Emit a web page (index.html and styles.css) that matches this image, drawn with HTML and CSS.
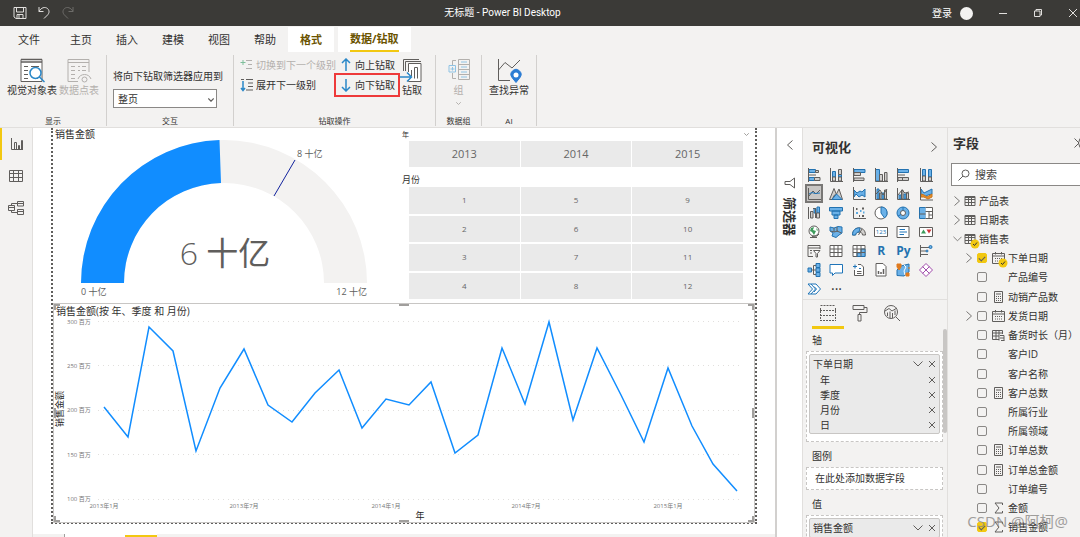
FILE: index.html
```html
<!DOCTYPE html>
<html lang="zh-CN">
<head>
  <meta charset="UTF-8">
  <title>无标题 - Power BI Desktop</title>
  <link rel="stylesheet" href="styles.css">
</head>
<body>
  <!-- shared icons -->
  <svg class="defs">
    <symbol id="right" viewBox="0 0 8 12"><path d="M1.500 1.500L6.500 6L1.500 10.500"/></symbol>
    <symbol id="left" viewBox="0 0 8 12"><path d="M6.500 1.500L1.500 6L6.500 10.500"/></symbol>
    <symbol id="down" viewBox="0 0 10 6"><path d="M.5 .5L5 5L9.500 .5"/></symbol>
    <symbol id="close" viewBox="0 0 8 8"><path d="M1 1L7 7M7 1L1 7"/></symbol>
    <symbol id="table" viewBox="0 0 12 12"><path d="M1 1.500H11V10.500H1ZM1 4.500H11M1 7.500H11M4.500 1.500V10.500M7.500 1.500V10.500"/><path d="M1 2H11" stroke-width="2"/></symbol>
    <symbol id="date" viewBox="0 0 13 12"><path d="M.5 1.500H12.500V11.500H.5ZM.5 4H12.500M3.500 0V2.500M9.500 0V2.500"/><path d="M3 6.500H11M3 9H11" stroke-dasharray="1 1"/></symbol>
    <symbol id="calc" viewBox="0 0 13 12"><path d="M2.500 .5H10.500V11.500H2.500ZM4 3H9"/><path d="M4 5.500H9.500M4 7.500H9.500M4 9.500H9.500" stroke-dasharray="1 1"/></symbol>
    <symbol id="calccol" viewBox="0 0 13 12"><path d="M7 10.500H.5V1.500H10.500V5M.5 4H10.500M.5 7H7M4 1.500V10.500M7 1.500V11.500"/><path d="M8 6.500H12V11.500M8 9H12M9 11.500H12.500"/></symbol>
    <symbol id="sum" viewBox="0 0 13 12"><path d="M10.500 3V1H3L7 6L3 11H10.500V9"/></symbol>
    <symbol id="tick" viewBox="0 0 10 10"><circle cx="5" cy="5" r="4.500" fill="#f2c811" stroke="none"/><path d="M3 5L4.500 6.500L7 3.500" stroke="#333"/></symbol>
  </svg>

  <header class="titlebar">
    <div class="quick">
      <button aria-label="保存"><svg width="14" height="14" viewBox="0 0 14 14"><path d="M1 1.500H13V12.500H3L1 11ZM3.500 1.500V6H10.500V1.500M4 12.500V8.500H10V12.500M6 9V12"/></svg></button>
      <button aria-label="撤消"><svg width="14" height="14" viewBox="0 0 14 14"><path d="M2 1V5.500H6.500M2 5.500C4 1.500 8 .5 10.500 2.500C13 5 12 7.500 10.500 9L7 12.500"/></svg></button>
      <button class="off" aria-label="恢复"><svg width="14" height="14" viewBox="0 0 14 14"><path d="M12 1V5.500H7.500M12 5.500C10 1.500 6 .5 3.500 2.500C1 5 2 7.500 3.500 9L7 12.500"/></svg></button>
    </div>
    <div class="app-title">无标题 - Power BI Desktop</div>
    <div class="account">
      <button class="login">登录 <span class="avatar"></span></button>
      <button aria-label="最小化"><svg width="10" height="10" viewBox="0 0 10 10"><path d="M1 5.500H9"/></svg></button>
      <button aria-label="还原"><svg width="10" height="10" viewBox="0 0 10 10"><path d="M1.500 3H7V8.500H1.500ZM3 3V1.500H8.500V7H7"/></svg></button>
      <button aria-label="关闭"><svg width="10" height="10" viewBox="0 0 10 10"><path d="M1 1L9 9M9 1L1 9"/></svg></button>
    </div>
  </header>

  <nav class="tabs">
    <button class="file">文件</button>
    <button>主页</button>
    <button>插入</button>
    <button>建模</button>
    <button>视图</button>
    <button>帮助</button>
    <button class="context">格式</button>
    <button class="context active"><span>数据/钻取</span></button>
  </nav>

  <section class="ribbon">
    <div class="group show">
      <div class="tools">
        <button class="big">
          <svg width="26" height="26" viewBox="0 0 26 26"><path d="M2 2.500H23V24.500H2Z" fill="#fff"/><path d="M2 2.500H23M2 5H23" stroke-width="1.500"/><path d="M5 9.500H9M5 13.500H9M5 17.500H9M5 21.500H9M12 9.500H20M17 21.500H19" /><circle cx="16.500" cy="16" r="5.500" fill="#fff" stroke="#2b88c8" stroke-width="1.500"/><path d="M20.500 20L25.500 25" stroke="#2b88c8" stroke-width="1.500"/></svg>
          视觉对象表
        </button>
        <button class="big" disabled>
          <svg width="26" height="26" viewBox="0 0 26 26"><path d="M12 24.500H2V2.500H23V15M2 5.500H23"/><path d="M5 9.500H9M5 13.500H9M5 17.500H9M12 9.500H14M16 9.500H20M12 13.500H14M16 13.500H20M5 21.500H9"/><path d="M12 22C14 16 23 16 25 22"/><circle cx="18.500" cy="22.500" r="2.500"/></svg>
          数据点表
        </button>
      </div>
      <div class="group-name">显示</div>
    </div>
    <div class="group interact">
      <label for="scope">将向下钻取筛选器应用到</label>
      <div class="select">
        <select id="scope"><option>整页</option></select>
        <svg width="6" height="4" viewBox="0 0 10 6"><path d="M.5 .5L5 5L9.500 .5" stroke-width="2"/></svg>
      </div>
      <div class="group-name">交互</div>
    </div>
    <div class="group drill">
      <div class="tools">
        <div class="stack">
          <button disabled><svg width="14" height="14" viewBox="0 0 14 14"><path d="M3 2V7M.5 4.500H5.500" stroke="#7fbf9b"/><path d="M6 2.500H12M8 6.500H12M6 10.500H12"/></svg>切换到下一个级别</button>
          <button><svg width="14" height="14" viewBox="0 0 14 14"><path d="M3 3V12M1 10L3 12.500L5 10" stroke="#2b88c8" stroke-width="1.500"/><path d="M1 1.500H4M6 1.500H13M8 5H13M8 8.500H13M6 12H13"/></svg>展开下一级别</button>
        </div>
        <div class="stack arrows">
          <button><svg width="14" height="14" viewBox="0 0 14 14"><path d="M7 1V13M3 5L7 1L11 5" stroke="#2b88c8" stroke-width="1.500"/></svg>向上钻取</button>
          <button class="marked"><svg width="14" height="14" viewBox="0 0 14 14"><path d="M7 1V13M3 9L7 13L11 9" stroke="#2b88c8" stroke-width="1.500"/></svg>向下钻取</button>
        </div>
        <button class="big">
          <svg width="26" height="26" viewBox="0 0 26 26"><path d="M4.500 14V2.500H20M6.500 14V4.500H22" /><path d="M9.500 15V6.500H22V24.500H9.500V23" fill="#fff"/><path d="M12.500 13V19M15.500 21.500V10.500H18.500V21.500" /><path d="M1 20H12M8 15.500L12.500 20L8 24.500" stroke="#2b88c8" stroke-width="1.500"/></svg>
          钻取
        </button>
      </div>
      <div class="group-name">钻取操作</div>
    </div>
    <div class="group data">
      <div class="tools">
        <button class="big" disabled>
          <svg width="26" height="26" viewBox="0 0 26 26"><path d="M12.500 2.500H23.500V22.500H12.500ZM12.500 7.500H23.500M12.500 12.500H23.500M12.500 17.500H23.500M10 3.500H6.500V8M6.500 16V21.500H10"/><path d="M15 5H21M15 10H21M15 15H21M15 20H21M3 8.500H9.500V15H3ZM6.500 10V13.500M4.500 12H8.500" stroke="#8fc3e4"/></svg>
          组
          <svg width="5" height="3" viewBox="0 0 10 6"><path d="M.5 .5L5 5L9.500 .5" stroke-width="2"/></svg>
        </button>
      </div>
      <div class="group-name">数据组</div>
    </div>
    <div class="group ai">
      <div class="tools">
        <button class="big">
          <svg width="26" height="26" viewBox="0 0 26 26"><path d="M2.500 2V23.500H14M2.500 13L9 5.500L16 11L24 3"/><path d="M20 25.500L16 20.500A5 5 0 1 1 24 20.500Z" fill="#2b7cd3" stroke="#2b7cd3"/><circle cx="20" cy="18" r="2.500" fill="#fff" stroke="none"/></svg>
          查找异常
        </button>
      </div>
      <div class="group-name">AI</div>
    </div>
  </section>

  <main>
    <nav class="rail">
      <button class="on" aria-label="报表"><svg width="14" height="14" viewBox="0 0 14 14"><path d="M1.500 1V12.500H13M4.500 12V5.500H6.500V12M8.500 12V8.500H9.500V12M11.500 12V3.500H12.500V12"/></svg></button>
      <button aria-label="数据"><svg width="14" height="14" viewBox="0 0 14 14"><path d="M.5 1.500H13.500V12.500H.5ZM.5 4.500H13.500M.5 8.500H13.500M4.500 1.500V12.500M9.500 1.500V12.500"/></svg></button>
      <button aria-label="模型"><svg width="16" height="16" viewBox="0 0 16 16"><path d="M.5 5.500H6.500V10.500H.5ZM.5 7.500H6.500M9.500 1.500H15.500V6H9.500ZM9.500 3.500H15.500M9.500 9.500H15.500V14.500H9.500ZM9.500 11.500H15.500M3.500 5.500V3.500H9.500M3.500 10.500V12.500H9.500"/></svg></button>
    </nav>

    <div class="canvas">
      <div class="report">
        <div class="gauge">
          <h2>销售金额</h2>
          <svg viewBox="53 140 349 162">
            <path class="gauge-track" d="M81 283A143 143 0 0 1 367 283H324A100 100 0 0 0 124 283Z"/>
            <path class="gauge-fill" d="M81 283A143 143 0 0 1 219.500 140L221 183A100 100 0 0 0 124 283Z"/>
            <path class="gauge-target" d="M274 196L295 160"/>
            <g class="gauge-label">
              <text x="297" y="157">8 十亿</text>
              <text x="81" y="295">0 十亿</text>
              <text x="367" y="295" text-anchor="end">12 十亿</text>
            </g>
            <text class="gauge-value" x="225" y="265" text-anchor="middle">6 <tspan class="unit">十亿</tspan></text>
          </svg>
        </div>

        <div class="slicers">
          <div class="slicer-head small">年<svg width="5" height="3" viewBox="0 0 10 6"><path d="M.5 .5L5 5L9.500 .5" stroke-width="2"/></svg></div>
          <div class="years">
            <button>2013</button><button>2014</button><button>2015</button>
          </div>
          <div class="slicer-head">月份</div>
          <div class="months">
            <button>1</button><button>5</button><button>9</button>
            <button>2</button><button>6</button><button>10</button>
            <button>3</button><button>7</button><button>11</button>
            <button>4</button><button>8</button><button>12</button>
          </div>
        </div>

        <div class="trend">
          <h2>销售金额(按 年、季度 和 月份)</h2>
          <svg viewBox="54 318 700 204">
            <path class="grid-line" d="M98 321.500H742M98 365.500H742M98 410.500H742M98 454.500H742M98 499.500H742"/>
            <g class="axis">
              <text x="67" y="324">300 百万</text>
              <text x="67" y="368">250 百万</text>
              <text x="67" y="412">200 百万</text>
              <text x="67" y="457">150 百万</text>
              <text x="67" y="501">100 百万</text>
              <text x="104" y="508" text-anchor="middle">2013年1月</text>
              <text x="244" y="508" text-anchor="middle">2013年7月</text>
              <text x="386" y="508" text-anchor="middle">2014年1月</text>
              <text x="526" y="508" text-anchor="middle">2014年7月</text>
              <text x="668" y="508" text-anchor="middle">2015年1月</text>
            </g>
            <text class="axis-title" x="420" y="519" text-anchor="middle">年</text>
            <text class="axis-title" transform="translate(63 409) rotate(-90)" text-anchor="middle">销售金额</text>
            <polyline class="line" points="104,407 128,437 149,327 173,351 196,451 220,388 244,349 268,405 292,422 315,393 339,370 362,428 386,399 409,405 431,382 455,453 478,435 502,348 525,404 549,322 573,420 597,348 621,395 644,442 668,368 692,426 713,464 737,491"/>
          </svg>
          <i class="handle tl"></i><i class="handle tc"></i><i class="handle tr"></i>
          <i class="handle ml"></i><i class="handle mr"></i>
          <i class="handle bl"></i><i class="handle bc"></i><i class="handle br"></i>
        </div>
      </div>
      <div class="pages"><span class="page"></span><span class="page current"></span></div>
    </div>

    <aside class="filters">
      <svg width="8" height="12"><use href="#left"/></svg>
      <svg width="12" height="12" viewBox="0 0 12 12"><path d="M10.500 1V11L6 7.500H1V4.500H6Z" /></svg>
      <h3>筛选器</h3>
    </aside>

    <aside class="viz">
      <div class="pane-head"><h3>可视化</h3><svg width="8" height="12"><use href="#right"/></svg></div>
      <div class="visuals">
        <button><svg viewBox="0 0 14 14"><path d="M2 1.500H8.500V4.500H2ZM2 9.500H7.500V12.500H2Z" class="b"/><path d="M8.500 2.500H11.500V4.500H8.500ZM7.500 9.500H13V12.500H7.500Z" class="g"/><path d="M1.500 0V14M2 7H9"/></svg></button>
        <button><svg viewBox="0 0 14 14"><path d="M3.500 3.500H6.500V9H3.500ZM9.500 6.500H12.500V9H9.500Z" class="b"/><path d="M3.500 9H6.500V13H3.500ZM9.500 1.500H12.500V6.500H9.500ZM9.500 9H12.500V13H9.500Z" class="g"/><path d="M1.500 0V13.500H14"/></svg></button>
        <button><svg viewBox="0 0 14 14"><path d="M2 1.500H13V4.500H2Z" class="b"/><path d="M2 4.500H8.500V7.500H2ZM2 10H12V12.500H2Z" class="g"/><path d="M1.500 0V14"/></svg></button>
        <button><svg viewBox="0 0 14 14"><path d="M1.500 1.500H5.500V13H1.500Z" class="b"/><path d="M5.500 6.500H8.500V13H5.500ZM10.500 4.500H13V13H10.500Z" class="g"/><path d="M1.500 0V13.500H14"/></svg></button>
        <button><svg viewBox="0 0 14 14"><path d="M2 1.500H12.500V4.500H2Z" class="b"/><path d="M2 9.500H12.500V12.500H2Z" class="g"/><path d="M1.500 0V14M2 7H9M6.500 9.500V12.500"/></svg></button>
        <button><svg viewBox="0 0 14 14"><path d="M3.500 1.500H6.500V8H3.500ZM9.500 1.500H12.500V9H9.500Z" class="b"/><path d="M3.500 8H6.500V13H3.500ZM9.500 9H12.500V13H9.500Z" class="g"/><path d="M1.500 0V13.500H14"/></svg></button>

        <button class="selected"><svg viewBox="0 0 14 14"><path d="M1.500 1V12.500H14"/><path d="M2 9L6 4L9 7L13 3"/><path d="M2 7L5 5.500L8 6.500L13 6" class="l"/></svg></button>
        <button><svg viewBox="0 0 14 14"><path d="M.5 12.500L5 1.500L9.500 12.500Z" class="g"/><path d="M7 8L10 2L13.500 12.500H3L5.500 8Z" class="g"/><path d="M3 12.500L7.500 7L13 12.500Z" class="b"/></svg></button>
        <button><svg viewBox="0 0 14 14"><path d="M2 3L5 6L8 4L10 5L13 2V10L10 8L7 10L4 7L2 10Z" class="b"/><path d="M1.500 0V12.500H14"/></svg></button>
        <button><svg viewBox="0 0 14 14"><path d="M3 2H5V12H3ZM8 6H10V12H8Z" class="b"/><path d="M5.500 6H7V12H5.500ZM10.500 3H12.500V12H10.500Z" class="g"/><path d="M1.500 0V12.500H14M2 7L6 3L9 8L13 2"/></svg></button>
        <button><svg viewBox="0 0 14 14"><path d="M3 8H5V12H3ZM8 7H10V12H8Z" class="b"/><path d="M5.500 3H7V12H5.500ZM10.500 6H12.500V12H10.500Z" class="g"/><path d="M1.500 1V12.500H14M2 8L6 3L9 6L13 5"/></svg></button>
        <button><svg viewBox="0 0 14 14"><path d="M2 2L5 6L9 4L13 2V7L9 8L5 10L2 7Z" class="b"/><path d="M2 7L5 8L8 10L13 7V10L9 12L5 10L2 10Z" fill="#e8912d" stroke="#c8741a"/><path d="M1.500 0V13H14"/></svg></button>

        <button><svg viewBox="0 0 14 14"><path d="M7 2.500H9V7H7ZM10 1H12.500V7H10Z" class="b"/><path d="M3.500 5.500H6V12H3.500ZM9.500 7H12.500V12H9.500Z" class="g"/><path d="M1.500 1V13M6 2.500H8.500V12"/></svg></button>
        <button><svg viewBox="0 0 14 14"><path d="M.5 1.500H13.500V5H.5ZM3 5H11V9H3ZM5 9H9V12.500H5Z" class="b"/></svg></button>
        <button><svg viewBox="0 0 14 14"><path d="M1.500 1V12.500H14"/><path d="M4 3H5.500M10 2.500H12M10 10H12M7 10H8" stroke-width="2"/><path d="M4 7H6M8 5H9.500M11 6.500H12.500" stroke="#5ca9e0" stroke-width="2"/></svg></button>
        <button><svg viewBox="0 0 14 14"><circle cx="7" cy="7" r="6" fill="#fff"/><path d="M7 1A6 6 0 0 1 10.500 12L7 7Z" class="b"/></svg></button>
        <button><svg viewBox="0 0 14 14"><circle cx="7" cy="7" r="6" class="b"/><circle cx="7" cy="7" r="2.500" fill="#fff"/><path d="M7 1V4.500M2 10L5 8.500" class="l"/></svg></button>
        <button><svg viewBox="0 0 14 14"><path d="M.5 1.500H6.500V12.500H.5Z" class="b"/><path d="M6.500 1.500H13.500V12.500H6.500" fill="#fff"/><path d="M.5 8H6.500M6.500 5.500H13.500M10 5.500V12.500M10 9H13.500"/></svg></button>

        <button><svg viewBox="0 0 14 14"><circle cx="7" cy="6" r="5" fill="#fff"/><path d="M4 3L7 2L6 5L9 6L7 10L5 7L3 6ZM9 3L11 5L10 6Z" fill="#3d9b5b" stroke="none"/><path d="M3 12.500H10M12 9L10 11L5 11.500"/></svg></button>
        <button><svg viewBox="0 0 14 14"><path d="M1 2L5 3L9 1.500L13 2V8L10 10L7 12.500L3 11L4 8L1 6Z" class="b"/><path d="M5 3V7L1.500 6M8 2V6L12.500 8M5 7L9 6"/></svg></button>
        <button><svg viewBox="0 0 14 14"><path d="M.5 10C.5 .5 13.500 .5 13.500 10H10.500C10.500 6 4 6 3.500 10Z" class="g"/><path d="M.5 10C.5 5 4 2.500 8 3L7 7C5 7 4 8 3.500 10Z" class="b"/><path d="M6.500 10L10 4"/></svg></button>
        <button><svg viewBox="0 0 14 14"><path d="M.5 2.500H13.500V11.500H.5Z" fill="#fff"/><text x="7" y="9" text-anchor="middle" class="num">123</text></svg></button>
        <button><svg viewBox="0 0 14 14"><path d="M1 1.500H13V12.500H1Z" fill="#fff"/><path d="M3.500 4.500H9M3.500 7H11M3.500 9.500H8" class="l"/></svg></button>
        <button><svg viewBox="0 0 14 14"><path d="M.5 2.500H13.500V11.500H.5Z" fill="#fff"/><path d="M2 8.500L4.500 4.500L7 8.500Z" fill="#3d9b5b" stroke="none"/><path d="M7.500 4.500H12.500L10 8.500Z" fill="#d13438" stroke="none"/></svg></button>

        <button><svg viewBox="0 0 14 14"><path d="M6 12.500H1V1.500H13V5M1 4H13M3 6.500H5M3 9H5"/><path d="M6.500 6.500H13L10.500 9.500V13H9V9.500Z" fill="#fff"/></svg></button>
        <button><svg viewBox="0 0 14 14"><path d="M1 1.500H13V12.500H1ZM1 5H13M1 8.500H13M5 1.500V12.500M9 1.500V12.500" fill="#fff"/></svg></button>
        <button><svg viewBox="0 0 14 14"><path d="M1 1.500H13V12.500H1Z" fill="#fff"/><path d="M9 5H13V12.500H5V9H9Z" class="b"/><path d="M1 5H13M1 8.500H13M5 1.500V12.500M9 1.500V12.500"/></svg></button>
        <button class="letters">R</button>
        <button class="letters">Py</button>
        <button><svg viewBox="0 0 14 14"><path d="M1.500 1V13M2 3.500H10M2 7H7M2 10.500H9"/><circle cx="11.500" cy="3" r="1.500" class="b"/><circle cx="8" cy="7" r="1" class="b"/></svg></button>

        <button><svg viewBox="0 0 14 14"><path d="M1 5H4.500V9H1ZM9 .5H13V4.500H9ZM9 5H13V9H9ZM9 9.500H13V13.500H9Z" class="b"/><path d="M4.500 7H9M6.500 7V2.500H9M6.500 7V11.500H9"/></svg></button>
        <button><svg viewBox="0 0 14 14"><path d="M1 1.500H13.500V10H6L3.500 12.500V10H1Z" class="l" fill="#fff"/></svg></button>
        <button><svg viewBox="0 0 14 14"><path d="M2.500 7V12.500H11.500V4L9 1.500H6" fill="#fff"/><path d="M5 8.500H9.500M5 10.500H9.500"/><path d="M1 3.500H5M3 1.500V5.500M7 5.500H9" class="l"/></svg></button>
        <button><svg viewBox="0 0 14 14"><path d="M2 .5H9L12 3.500V13H2Z" fill="#fff"/><path d="M4.500 11V8M7 11V9M9.500 11V6" stroke-width="1.500"/></svg></button>
        <button><svg viewBox="0 0 14 14"><path d="M5 3L13 1V9L8 13L1 12.500V7Z" class="b"/><path d="M8 2L10 4L8 8L9 12" stroke="#fff"/><path d="M1 1H5V4L3 7L1 4ZM10 10H13V13H10ZM12 5H14" fill="#e07a1f" stroke="#e07a1f"/></svg></button>
        <button><svg viewBox="0 0 14 14"><path d="M7 .5L13.500 7L7 13.500L.5 7ZM3.500 3.500L10.500 10.500M10.500 3.500L3.500 10.500" fill="#fff" stroke="#a04bab"/></svg></button>

        <button><svg viewBox="0 0 14 14"><path d="M1 2H9L13.500 7L9 12H1L5.500 7ZM4 2L8.500 7L4 12M7 4.500L9.500 7L7 10" class="l" fill="#fff"/></svg></button>
        <button class="more" aria-label="更多">···</button>
      </div>

      <div class="viz-tabs">
        <button class="on" aria-label="字段"><svg width="18" height="18" viewBox="0 0 18 18"><path d="M1.500 1.500H16.500M1 6.500H17M1 11.500H17M1 16.500H17M1.500 4V16M16.500 4V16" stroke-dasharray="2 1"/></svg></button>
        <button aria-label="格式"><svg width="18" height="18" viewBox="0 0 18 18"><path d="M2 1.500H13V5.500H2ZM13 3.500H16V8.500H8.500V10M7 10.500H10V17H7Z"/></svg></button>
        <button aria-label="分析"><svg width="18" height="18" viewBox="0 0 18 18"><circle cx="8" cy="8" r="6.500"/><path d="M13 13L17 17M2 7L6 4.500L9 7L14 4M4.500 12V8.500M7 14V7.500M9.500 14V9M12 11V6.500"/></svg></button>
      </div>

      <div class="wells">
        <h4>轴</h4>
        <div class="well tall">
          <div class="pill">
            <div class="row"><span>下单日期</span><svg width="10" height="6"><use href="#down"/></svg><button aria-label="删除"><svg width="8" height="8"><use href="#close"/></svg></button></div>
            <div class="row sub"><span>年</span><button aria-label="删除"><svg width="8" height="8"><use href="#close"/></svg></button></div>
            <div class="row sub"><span>季度</span><button aria-label="删除"><svg width="8" height="8"><use href="#close"/></svg></button></div>
            <div class="row sub"><span>月份</span><button aria-label="删除"><svg width="8" height="8"><use href="#close"/></svg></button></div>
            <div class="row sub"><span>日</span><button aria-label="删除"><svg width="8" height="8"><use href="#close"/></svg></button></div>
          </div>
        </div>
        <h4>图例</h4>
        <div class="well empty">在此处添加数据字段</div>
        <h4>值</h4>
        <div class="well">
          <div class="pill">
            <div class="row"><span>销售金额</span><svg width="10" height="6"><use href="#down"/></svg><button aria-label="删除"><svg width="8" height="8"><use href="#close"/></svg></button></div>
          </div>
        </div>
        <i class="scrollbar"></i>
      </div>
    </aside>

    <aside class="fields">
      <div class="pane-head"><h3>字段</h3><svg class="cut" width="14" height="12" viewBox="0 0 14 12"><path d="M1.500 1.500L6 6L1.500 10.500M7 1.500L5.500 6L7 10.500"/></svg></div>
      <div class="search">
        <svg width="12" height="12" viewBox="0 0 12 12"><circle cx="7.500" cy="4.500" r="3.500"/><path d="M5 7L.5 11.500"/></svg>
        <input type="text" placeholder="搜索" aria-label="搜索">
      </div>
      <ul class="list">
        <li class="top"><svg class="arrow"><use href="#right"/></svg><svg class="icon"><use href="#table"/></svg>产品表</li>
        <li class="top"><svg class="arrow"><use href="#right"/></svg><svg class="icon"><use href="#table"/></svg>日期表</li>
        <li class="top"><svg class="arrow wide"><use href="#down"/></svg><svg class="icon"><use href="#table"/></svg><svg class="badge"><use href="#tick"/></svg>销售表</li>
        <li><svg class="arrow"><use href="#right"/></svg><label><input type="checkbox" checked><svg class="icon"><use href="#date"/></svg><svg class="badge"><use href="#tick"/></svg>下单日期</label></li>
        <li><svg class="arrow"></svg><label><input type="checkbox"><svg class="icon"></svg>产品编号</label></li>
        <li><svg class="arrow"></svg><label><input type="checkbox"><svg class="icon"><use href="#calc"/></svg>动销产品数</label></li>
        <li><svg class="arrow"><use href="#right"/></svg><label><input type="checkbox"><svg class="icon"><use href="#date"/></svg>发货日期</label></li>
        <li><svg class="arrow"></svg><label><input type="checkbox"><svg class="icon"><use href="#calccol"/></svg>备货时长（月）</label></li>
        <li><svg class="arrow"></svg><label><input type="checkbox"><svg class="icon"></svg>客户ID</label></li>
        <li><svg class="arrow"></svg><label><input type="checkbox"><svg class="icon"></svg>客户名称</label></li>
        <li><svg class="arrow"></svg><label><input type="checkbox"><svg class="icon"><use href="#calc"/></svg>客户总数</label></li>
        <li><svg class="arrow"></svg><label><input type="checkbox"><svg class="icon"></svg>所属行业</label></li>
        <li><svg class="arrow"></svg><label><input type="checkbox"><svg class="icon"></svg>所属领域</label></li>
        <li><svg class="arrow"></svg><label><input type="checkbox"><svg class="icon"><use href="#calc"/></svg>订单总数</label></li>
        <li><svg class="arrow"></svg><label><input type="checkbox"><svg class="icon"><use href="#calc"/></svg>订单总金额</label></li>
        <li><svg class="arrow"></svg><label><input type="checkbox"><svg class="icon"></svg>订单编号</label></li>
        <li><svg class="arrow"></svg><label><input type="checkbox"><svg class="icon"><use href="#sum"/></svg>金额</label></li>
        <li><svg class="arrow"></svg><label><input type="checkbox" checked><svg class="icon"><use href="#sum"/></svg>销售金额</label></li>
      </ul>
    </aside>
  </main>
  <div class="watermark">CSDN @阿柯@</div>
</body>
</html>
```

FILE: styles.css
```css
* {
  box-sizing: border-box;
}

body {
  margin: 0;
  height: 100vh;
  display: flex;
  flex-direction: column;
  overflow: hidden;
  position: relative;
  background: #fff;
  color: #323130;
  font-family: "Open Sans", "Noto Sans CJK SC", sans-serif;
  font-size: 10px;
  line-height: 14px;
}

button, select, input {
  font: inherit;
  color: inherit;
  margin: 0;
  padding: 0;
  border: 0;
  background: none;
}

button {
  display: flex;
  align-items: center;
  justify-content: center;
  white-space: nowrap;
}

svg {
  fill: none;
  stroke: #605e5c;
  flex: none;
}

svg text {
  stroke: none;
}

h2, h3, h4, ul {
  margin: 0;
  padding: 0;
  font-weight: normal;
}

.defs {
  display: none;
}

/* title bar */
.titlebar {
  flex: none;
  height: 26px;
  display: grid;
  grid-template-columns: 1fr auto 1fr;
  align-items: center;
  background: #3b3a37;
  color: #fff;
}

.titlebar svg {
  stroke: #e1dfdd;
}

.quick {
  display: flex;
  gap: 10px;
  padding-left: 13px;
}

.quick .off {
  opacity: 0.3;
}

.app-title {
  padding-right: 75px;
  font-family: Roboto, "Noto Sans CJK SC", sans-serif;
}

.account {
  display: flex;
  justify-content: flex-end;
  gap: 25px;
  padding-right: 2px;
}

.login {
  gap: 8px;
}

.avatar {
  width: 13px;
  height: 13px;
  border-radius: 50%;
  background: #f3f2f1;
}

/* ribbon */
.tabs {
  flex: none;
  display: flex;
  height: 26px;
  padding: 1px 0 0 6px;
  background: #f3f2f1;
  font-size: 11px;
}

.tabs button {
  padding: 0 12px;
}

.tabs .file {
  margin-right: 6px;
}

.tabs .context {
  background: #fff;
  color: #6b5300;
  font-weight: bold;
}

.tabs .active {
  margin-left: 4px;
  align-items: stretch;
}

.active span {
  padding-top: 5px;
  border-bottom: 2px solid #f2c811;
}

.ribbon {
  flex: none;
  display: flex;
  height: 76px;
  padding: 3px 0 1px;
  background: #f3f2f1;
  border-bottom: 1px solid #e1dfdd;
}

.group {
  display: flex;
  flex-direction: column;
  border-right: 1px solid #d2d0ce;
}

.show {
  width: 107px;
}

.interact {
  width: 127px;
  padding: 14px 16px 0 6px;
}

.interact label {
  white-space: nowrap;
}

.drill {
  width: 202px;
}

.data {
  width: 46px;
}

.ai {
  width: 55px;
}

.tools {
  display: flex;
  justify-content: center;
}

.group-name {
  margin-top: auto;
  font-size: 8px;
  line-height: 10px;
  text-align: center;
}

.interact .group-name {
  padding-left: 10px;
}

.big {
  flex-direction: column;
  padding: 2px 1px 0;
}

.big svg + svg {
  margin-top: 5px;
}

button:disabled {
  color: #b3b0ad;
}

button:disabled svg {
  stroke: #b3b0ad;
}

.select {
  position: relative;
  margin-top: 6px;
}

.select select {
  display: block;
  appearance: none;
  width: 104px;
  height: 19px;
  padding-left: 4px;
  border: 1px solid #8a8886;
  background: #fff;
}

.select svg {
  position: absolute;
  right: 3px;
  top: 9px;
}

.drill .tools {
  padding-right: 3px;
}

.stack {
  display: flex;
  flex-direction: column;
  align-items: flex-start;
}

.stack button {
  height: 20px;
  gap: 2px;
}

.arrows button {
  padding: 0 3px;
}

.marked {
  outline: 2px solid #ee3a3a;
}

/* work area */
main {
  flex: 1;
  min-height: 0;
  display: flex;
}

.rail {
  width: 33px;
  background: #f3f2f1;
  border-right: 1px solid #e1dfdd;
}

.rail button {
  width: 100%;
  height: 32px;
}

.rail .on {
  border-left: 2px solid #f2c811;
}

.canvas {
  flex: 1;
  min-width: 0;
  display: flex;
  flex-direction: column;
}

.report {
  flex: 1;
  min-height: 0;
  display: grid;
  grid-template-columns: 349px 1fr;
  grid-template-rows: 175px 1fr;
  margin: 0 18px 10px;
  border: 2px dotted #605e5c;
  border-top: 0;
}

.report svg {
  display: block;
  width: 100%;
}

.report h2 {
  padding-left: 2px;
  font-size: 10px;
  line-height: 12px;
}

.gauge-track {
  fill: #f3f2f1;
  stroke: none;
}

.gauge-fill {
  fill: #118dff;
  stroke: none;
}

.gauge-target {
  stroke: #12239e;
}

.gauge-label {
  fill: #605e5c;
  font-size: 9px;
}

.gauge-value {
  fill: #605e5c;
  font-size: 32px;
  font-weight: 300;
}

.unit {
  font-weight: normal;
}

.slicers {
  padding-right: 12px;
}

.slicer-head {
  display: flex;
  justify-content: space-between;
  align-items: center;
  height: 20px;
  padding-top: 6px;
  font-size: 9px;
}

.slicer-head.small {
  height: 13px;
  padding-top: 0;
  font-size: 7px;
}

.slicer-head svg {
  width: 5px;
  margin-right: -6px;
  stroke: #a19f9d;
}

.years, .months {
  display: grid;
  grid-template-columns: 1fr 1fr 1fr;
  gap: 2px 1px;
  margin-left: 7px;
}

.years {
  height: 26px;
  font-size: 11px;
}

.months {
  height: 112px;
  font-size: 8px;
}

.slicers button {
  background: #eaeaea;
  color: #666;
}

.trend {
  grid-column: 1 / 3;
  position: relative;
  border: 1px solid #c8c6c4;
}

.trend h2 {
  line-height: 14px;
}

.grid-line {
  stroke: #e1dfdd;
  stroke-dasharray: 1 4;
}

.axis {
  fill: #777;
  font-size: 6px;
}

.axis-title {
  fill: #252423;
  font-size: 9px;
}

.line {
  stroke: #118dff;
  stroke-width: 1.5;
}

.handle {
  position: absolute;
  width: 6px;
  height: 6px;
  border: 0 solid #a19f9d;
}

.tl, .tc, .tr {
  top: 0;
  border-top-width: 2px;
}

.bl, .bc, .br {
  bottom: 0;
  border-bottom-width: 2px;
}

.tl, .ml, .bl {
  left: 0;
  border-left-width: 2px;
}

.tr, .mr, .br {
  right: 0;
  border-right-width: 2px;
}

.tc, .bc {
  left: 50%;
  width: 10px;
  margin-left: -5px;
}

.ml, .mr {
  top: 50%;
  height: 10px;
  margin-top: -5px;
}

.pages {
  flex: none;
  display: flex;
  height: 3px;
  background: #f3f2f1;
  padding-left: 31px;
}

.page {
  width: 61px;
  background: #fff;
  border-left: 1px solid #a19f9d;
}

.page.current {
  width: 32px;
  border: 0;
  border-bottom: 2px solid #f2c811;
}

/* filters */
.filters {
  width: 27px;
  display: flex;
  flex-direction: column;
  align-items: center;
  padding-top: 11px;
  border-left: 2px solid #d2d0ce;
}

.filters svg + svg {
  margin-top: 26px;
}

.filters h3 {
  margin-top: 8px;
  writing-mode: vertical-rl;
  text-orientation: sideways;
  font-size: 13px;
  font-weight: bold;
}

/* visualizations */
.viz {
  width: 145px;
  display: flex;
  flex-direction: column;
  background: #f3f2f1;
  border-left: 1px solid #e1dfdd;
}

.pane-head {
  flex: none;
  display: flex;
  justify-content: space-between;
  align-items: center;
  height: 34px;
  padding: 0 9px;
}

.viz .pane-head {
  height: 37px;
}

.pane-head h3 {
  font-size: 13px;
  font-weight: bold;
}

.visuals {
  flex: none;
  display: grid;
  grid-template-columns: repeat(6, 1fr);
  grid-auto-rows: 1fr;
  height: 135px;
  padding-right: 10px;
  border-bottom: 1px solid #e1dfdd;
}

.visuals button {
  justify-self: center;
  width: 18px;
}

.visuals svg {
  width: 14px;
  height: 14px;
}

.visuals .selected {
  border: 2px solid #797775;
  background: #c8c6c4;
}

.visuals .b {
  fill: #6bb1e8;
  stroke: #2372b0;
}

.visuals .g {
  fill: #d2d0ce;
}

.visuals .l {
  stroke: #1f74b8;
}

.visuals .num {
  fill: #2372b0;
  font-size: 6px;
}

.visuals .letters {
  color: #2372b0;
  font-size: 12px;
  font-weight: bold;
}

.visuals .more {
  font-size: 14px;
}

.viz-tabs {
  flex: none;
  display: flex;
  height: 29px;
  padding: 0 9px;
}

.viz-tabs button {
  width: 32px;
  border-bottom: 3px solid transparent;
}

.viz-tabs .on {
  border-color: #f2c811;
}

.wells {
  flex: 1;
  min-height: 0;
  overflow: hidden;
  position: relative;
  padding: 0 4px 0 3px;
}

.wells h4 {
  padding: 4px 6px;
  font-size: 10px;
}

.well {
  min-height: 23px;
  padding: 2px;
  margin-bottom: 3px;
  border: 1px dashed #c8c6c4;
  background: #fff;
}

.tall {
  padding-bottom: 7px;
}

.empty {
  padding: 3px 8px;
}

.pill {
  padding-bottom: 1px;
  border: 1px solid #c8c6c4;
  border-radius: 2px;
  background: #eaeaea;
}

.row {
  display: flex;
  align-items: center;
  gap: 5px;
  height: 17px;
  padding: 0 3px;
}

.row span {
  flex: 1;
}

.row.sub {
  height: 15px;
  padding-left: 10px;
}

.scrollbar {
  position: absolute;
  top: 0;
  right: 0;
  width: 4px;
  height: 104px;
  border-radius: 2px;
  background: #c8c6c4;
}

/* fields */
.fields {
  width: 133px;
  display: flex;
  flex-direction: column;
  background: #f3f2f1;
  border-left: 1px solid #e1dfdd;
}

.fields .pane-head {
  height: 30px;
  padding: 0 0 0 5px;
}

.cut {
  margin-right: -7px;
}

.search {
  flex: none;
  display: flex;
  align-items: center;
  gap: 5px;
  height: 23px;
  margin: 5px 0 5px 3px;
  padding-left: 6px;
  border: 1px solid #8a8886;
  border-right: 0;
  background: #fff;
  font-size: 11px;
}

.search input {
  flex: 1;
  min-width: 0;
}

.search input::placeholder {
  color: #484644;
}

.list {
  flex: 1;
  display: grid;
  grid-auto-rows: 1fr;
  list-style: none;
}

.list li {
  display: flex;
  align-items: center;
  gap: 4px;
  padding-left: 17px;
  position: relative;
  white-space: nowrap;
}

.list .top {
  gap: 3px;
  padding-left: 5px;
}

.list label {
  display: flex;
  align-items: center;
  gap: 3px;
}

.arrow {
  width: 8px;
  height: 12px;
  stroke: #797775;
}

.arrow.wide {
  width: 9px;
  height: 6px;
  margin-right: -1px;
}

.icon {
  width: 13px;
  height: 12px;
}

.top .icon {
  width: 12px;
}

.badge {
  position: absolute;
  left: 50px;
  bottom: 0;
  width: 10px;
  height: 10px;
}

.top .badge {
  left: 22px;
}

.list input {
  appearance: none;
  width: 10px;
  height: 10px;
  margin-right: 2px;
  border: 1px solid #8a8886;
  border-radius: 2px;
}

.list input:checked {
  border-color: #f2c811;
  background: #f2c811;
}

.list input:checked::after {
  content: "";
  display: block;
  width: 5px;
  height: 3px;
  margin: 2px 0 0 1px;
  border: solid #605e5c;
  border-width: 0 0 1px 1px;
  transform: rotate(-45deg);
}

.watermark {
  position: absolute;
  right: 12px;
  bottom: 6px;
  color: #8a8886;
  opacity: 0.8;
  font-size: 15px;
  line-height: 20px;
}
```
